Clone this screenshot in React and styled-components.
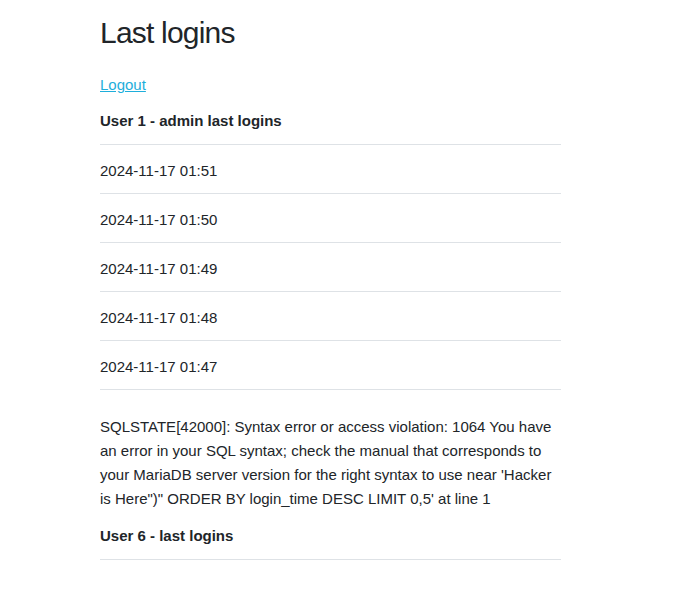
import React from "react";
import styled, { createGlobalStyle } from "styled-components";

const GlobalStyle = createGlobalStyle`
  body {
    margin: 0;
    background: #fff;
    color: #212529;
    font-family: "Liberation Sans", Arial, sans-serif;
    font-size: 15px;
    line-height: 1.6;
  }
`;

const Page = styled.div`
  width: 461px;
  padding: 15px 0 0 100px;
`;

const Title = styled.h1`
  margin: 0 0 22px;
  font-size: 30px;
  font-weight: 400;
  line-height: 1.2;
  letter-spacing: -0.8px;
`;

const LogoutLink = styled.a`
  display: block;
  margin-bottom: 12px;
  color: #1eaedb;
  text-decoration: underline;
`;

const SectionTitle = styled.h5`
  margin: 0 0 11px;
  font-size: 15px;
  font-weight: 700;
  line-height: 1.6;
`;

const LoginList = styled.ul`
  list-style: none;
  margin: 0 0 25px;
  padding: 0;
  border-top: 1px solid #dee2e6;
`;

const LoginItem = styled.li`
  padding: 14px 0 10px;
  border-bottom: 1px solid #dee2e6;
`;

const ErrorText = styled.p`
  margin: 0 0 13px;
`;

const logins = [
  "2024-11-17 01:51",
  "2024-11-17 01:50",
  "2024-11-17 01:49",
  "2024-11-17 01:48",
  "2024-11-17 01:47",
];

export default function App() {
  return (
    <Page>
      <GlobalStyle />
      <Title>Last logins</Title>
      <LogoutLink href="#">Logout</LogoutLink>
      <SectionTitle>User 1 - admin last logins</SectionTitle>
      <LoginList>
        {logins.map((t) => (
          <LoginItem key={t}>{t}</LoginItem>
        ))}
      </LoginList>
      <ErrorText>
        SQLSTATE[42000]: Syntax error or access violation: 1064 You have an
        error in your SQL syntax; check the manual that corresponds to your
        MariaDB server version for the right syntax to use near 'Hacker is
        Here")" ORDER BY login_time DESC LIMIT 0,5' at line 1
      </ErrorText>
      <SectionTitle>User 6 - last logins</SectionTitle>
      <LoginList />
    </Page>
  );
}
